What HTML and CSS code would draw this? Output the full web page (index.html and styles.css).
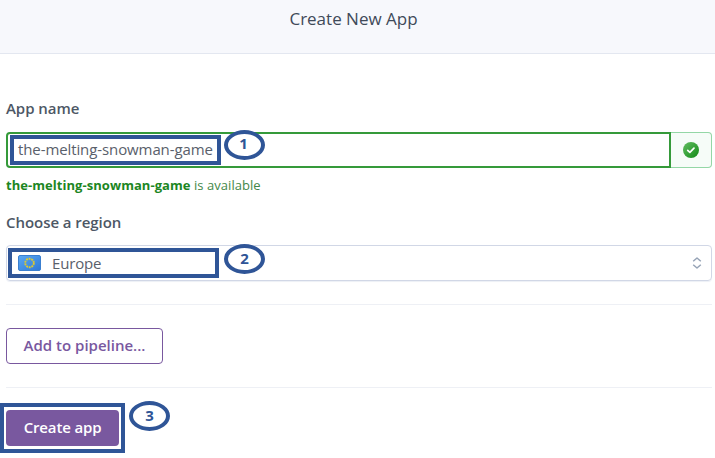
FILE: index.html
```
<!DOCTYPE html>
<html lang="en">
<head>
<meta charset="utf-8">
<title>Create New App</title>
<link rel="stylesheet" href="styles.css">
</head>
<body>
<header class="header"><h1 class="title">Create New App</h1></header>
<main class="form">
  <label class="label label-name">App name</label>
  <div class="field name-field">
    <div class="name-input"><span class="name-value">the-melting-snowman-game</span></div>
    <div class="addon">
      <svg width="16" height="16" viewBox="0 0 16 16">
        <defs><linearGradient id="ok" x1="0" y1="0" x2="1" y2="1"><stop offset="0" stop-color="#62bd62"/><stop offset="1" stop-color="#128a16"/></linearGradient></defs>
        <circle cx="8" cy="8" r="8" fill="url(#ok)"/>
        <path d="M4.7 8.3l2.2 2.1 4.1-4.2" fill="none" stroke="#fff" stroke-width="1.7" stroke-linecap="round" stroke-linejoin="round"/>
      </svg>
    </div>
    <i class="mark mark-name"></i><b class="step step-1">1</b>
  </div>
  <p class="hint"><strong>the-melting-snowman-game</strong> <span>is available</span></p>
  <label class="label label-region">Choose a region</label>
  <div class="field select">
    <svg class="flag" width="23" height="16" viewBox="0 0 23 16">
      <defs><linearGradient id="eu" x1="0" y1="0" x2="1" y2="1"><stop offset="0" stop-color="#5ba9f2"/><stop offset="1" stop-color="#2f78d8"/></linearGradient></defs>
      <rect x=".5" y=".5" width="22" height="15" rx="1.5" fill="url(#eu)" stroke="#3a7fd0"/>
      <circle cx="11.5" cy="8" r="4.3" fill="none" stroke="#dcc832" stroke-width="1.9" stroke-dasharray="1.9 .8"/>
    </svg>
    <span class="region">Europe</span>
    <svg class="chevrons" width="10" height="12" viewBox="0 0 10 12"><path d="M1.2 4.2L5 1l3.8 3.2M1.2 7.8L5 11l3.8-3.2" fill="none" stroke="#96a3b6" stroke-width="1.5" stroke-linejoin="round"/></svg>
    <i class="mark mark-region"></i><b class="step step-2">2</b>
  </div>
  <div class="section"><button class="button outline"><span>Add to pipeline...</span></button></div>
  <div class="section last"><div class="create"><button class="button primary"><span>Create app</span></button><i class="mark mark-create"></i><b class="step step-3">3</b></div></div>
</main>
</body>
</html>
```
FILE: styles.css
```
* { box-sizing: border-box; }
body { margin: 0; height: 458px; overflow: hidden; background: #fff; color: #3f4a59; font-family: "Open Sans", "Noto Sans", sans-serif; font-size: 15px; }
.header { height: 54px; background: #f7f8fc; border-bottom: 1px solid #e3e7f0; padding: 7px 8px 0 0; text-align: center; }
.title { margin: 0; font-size: 17px; line-height: 24px; font-weight: 400; }
.form { padding: 42px 3px 0 6px; }
.label { display: block; height: 24px; line-height: 24px; font-size: 15px; font-weight: 600; letter-spacing: -.05px; color: #4d5765; }
.label-name { margin-bottom: 12px; }
.field { position: relative; display: flex; height: 36px; }
.name-input { width: 665px; border: 2px solid #359a3a; border-radius: 4px 0 0 4px; padding-left: 10px; line-height: 31px; font-size: 15px; letter-spacing: -.1px; color: #59606b; }
.addon { flex: 1; display: flex; align-items: center; justify-content: center; background: #f6fcf8; border: 1px solid #94d7a6; border-left: 0; border-radius: 0 4px 4px 0; }
.hint { margin: 7px 0 0; height: 20px; line-height: 20px; font-size: 13px; letter-spacing: .05px; color: #1c8623; white-space: nowrap; }
.hint span { color: #438849; }
.label-region { margin: 15px 0 11px; }
.select { align-items: center; border: 1px solid #d1d7e6; border-radius: 4px; padding: 0 9px 0 11px; box-shadow: 0 1px 1px #edf0f6; }
.region { margin-left: 11px; font-size: 15px; letter-spacing: -.15px; line-height: 24px; color: #59606b; }
.chevrons { margin-left: auto; }
.section { margin-top: 23px; padding-top: 23px; border-top: 1px solid #eef0f5; }
.section.last { margin-top: 23px; padding-top: 22px; }
.button { height: 36px; display: block; border-radius: 4px; padding: 0 0 3px; font: 600 15px "Open Sans", sans-serif; white-space: nowrap; }
.outline { width: 157px; border: 1px solid #79589f; background: #fff; color: #79589f; }
.primary { width: 113px; border: 0; background: #79589f; color: #fff; letter-spacing: -.15px; }
.create { position: relative; }
.mark { position: absolute; border: 4px solid #2f5597; }
.mark-name { left: 4px; top: 3px; width: 211px; height: 30px; }
.mark-region { left: 1px; top: 2px; width: 211px; height: 30px; }
.mark-create { left: -6px; top: -7px; width: 125px; height: 50px; }
.step { position: absolute; width: 41px; height: 30px; border: 4px solid #2f5597; border-radius: 50%; background: #fff; color: #2f5597; font-size: 15px; line-height: 21px; text-align: center; }
.step-1 { left: 218px; top: -2px; padding-right: 2px; line-height: 18px; }
.step-2 { left: 217px; top: -2px; }
.step-3 { left: 123px; top: -9px; }
```
